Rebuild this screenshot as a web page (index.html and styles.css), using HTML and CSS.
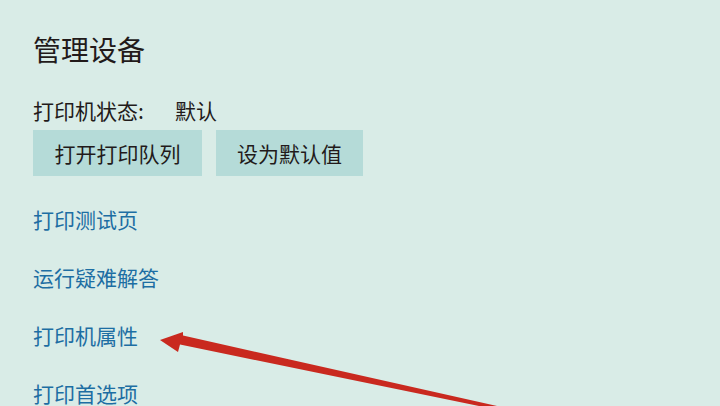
FILE: index.html
```html
<!DOCTYPE html>
<html lang="zh-CN">
<head>
<meta charset="utf-8">
<title>管理设备</title>
<link rel="stylesheet" href="styles.css">
</head>
<body>
<main class="page">
  <h1 class="title">管理设备</h1>
  <div class="status">
    <span class="status-label">打印机状态:</span>
    <span class="status-value">默认</span>
  </div>
  <div class="buttons">
    <button class="btn btn-queue">打开打印队列</button>
    <button class="btn btn-default">设为默认值</button>
  </div>
  <nav class="links">
    <a class="link">打印测试页</a>
    <a class="link">运行疑难解答</a>
    <a class="link">打印机属性</a>
    <a class="link">打印首选项</a>
  </nav>
</main>
<svg class="arrow" width="720" height="406" viewBox="0 0 720 406" aria-hidden="true">
  <polygon fill="#c9291f" points="160,340 183,332 183,335.5 497,406 479,406 180,344.5 178,352"/>
</svg>
</body>
</html>
```
FILE: styles.css
```css
html, body {
  margin: 0;
  padding: 0;
}
body {
  width: 720px;
  height: 406px;
  overflow: hidden;
  background: #d9ece7;
  font-family: "Noto Sans CJK SC", "Noto Sans", sans-serif;
  color: #221a1a;
  position: relative;
}
.page {
  padding: 29px 0 0 33px;
  display: flex;
  flex-direction: column;
}
.title {
  margin: 0;
  font-size: 28px;
  font-weight: 400;
  line-height: 40px;
}
.status {
  margin-top: 29px;
  display: flex;
  font-size: 21px;
  line-height: 24px;
}
.status-label {
  width: 142px;
}
.buttons {
  margin-top: 8px;
  display: flex;
  gap: 14px;
}
.btn {
  height: 46px;
  padding: 0 21px;
  border: none;
  background: #b5dbd8;
  font-family: inherit;
  font-size: 21px;
  color: #221a1a;
  line-height: 46px;
}
.btn-queue {
  width: 169px;
}
.btn-default {
  width: 147px;
}
.links {
  margin-top: 33px;
  display: flex;
  flex-direction: column;
  gap: 38px;
}
.link {
  font-size: 21px;
  line-height: 20px;
  color: #1d6ea3;
}
.arrow {
  position: absolute;
  left: 0;
  top: 0;
  pointer-events: none;
}
```
